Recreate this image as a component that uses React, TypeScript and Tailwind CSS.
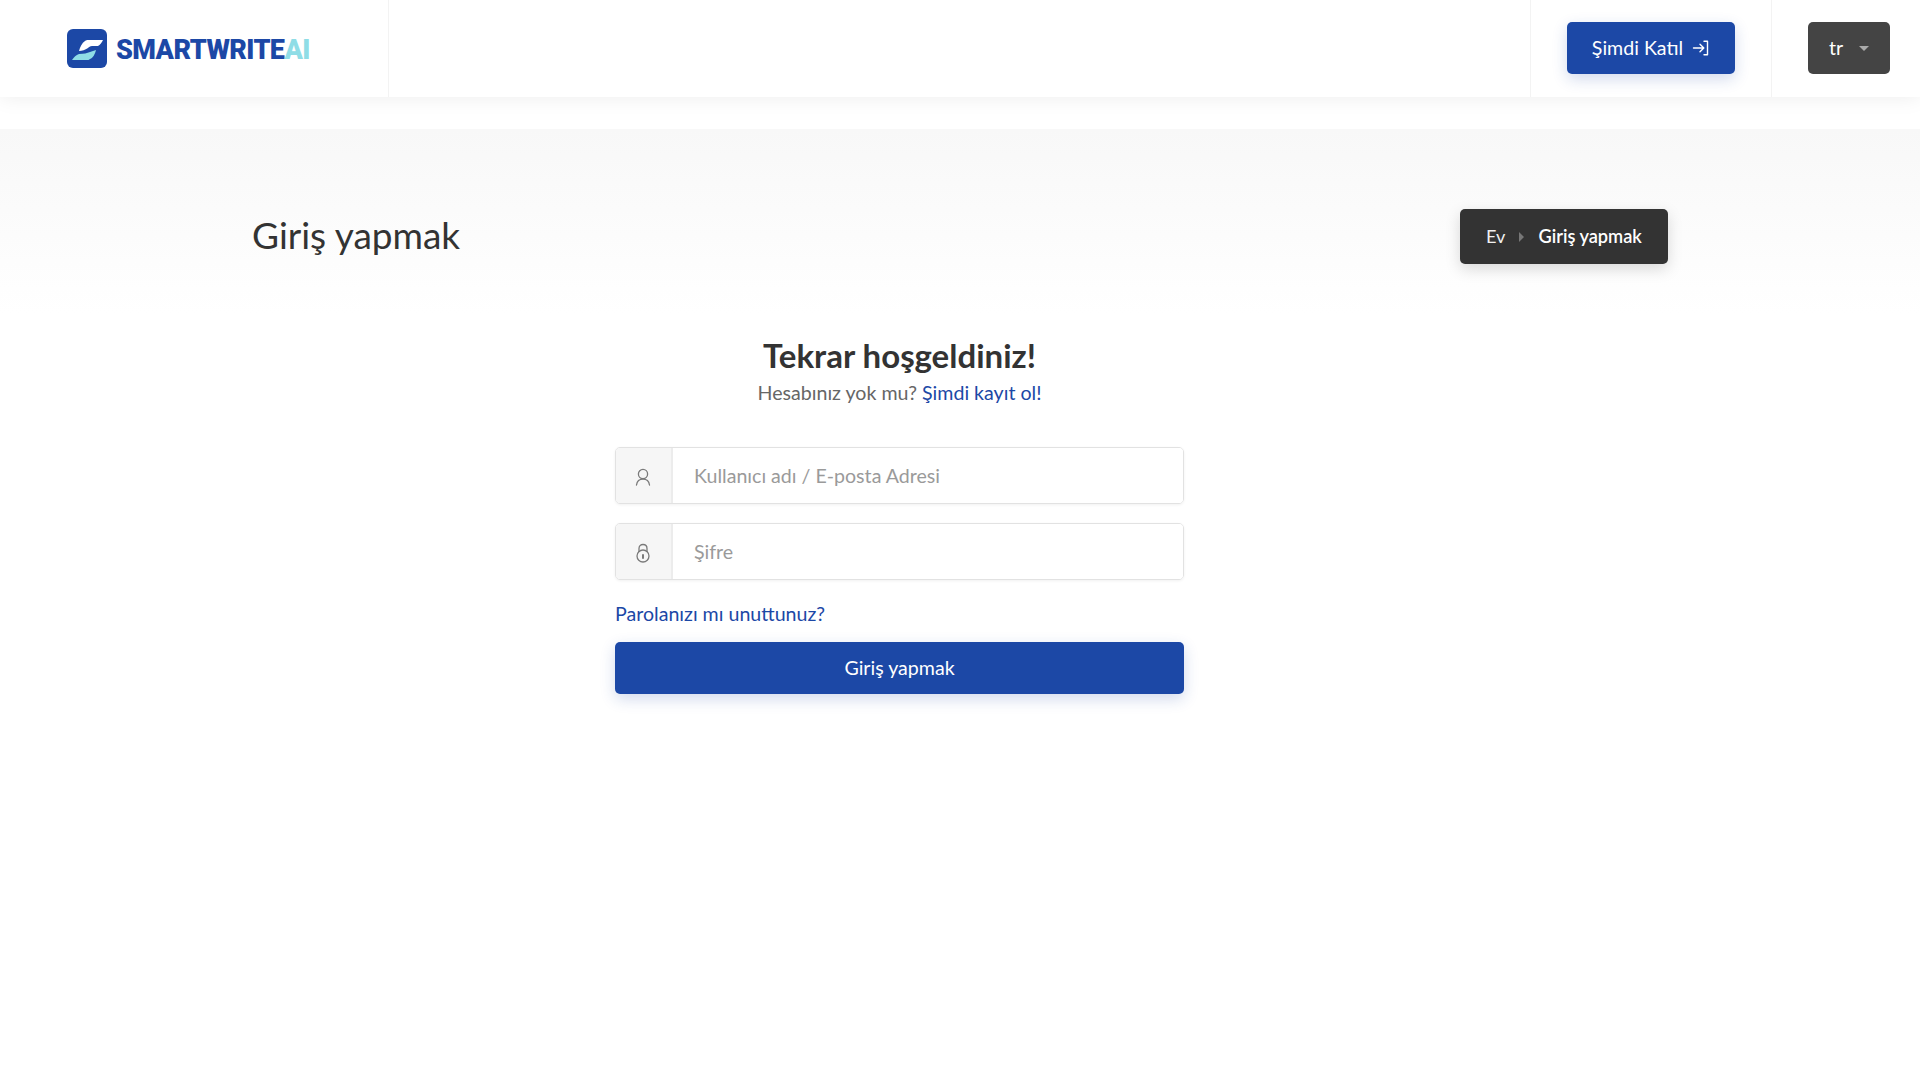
import React from "react";

const F = { fontFamily: '"Lato", "Open Sans", sans-serif' };

function Logo() {
  return (
    <div className="flex items-center gap-[9px]">
      <svg width="40" height="39" viewBox="0 0 40 39">
        <rect width="40" height="39" rx="6" fill="#1c48a6" />
        <path d="M18 12 C19 11 20 11 21 11 H36 C35 13 33 16 31 17 H25 C23 17 22 18 21 19 C18 21 15 22 12 22 C13 18 15 14 18 12 Z" fill="#ffffff" />
        <path d="M12 25 C17 25 20 24 23 23 L29 21 C28 25 26 29 23 30 C22 31 21 31 20 31 H5 C7 28 9 26 12 25 Z" fill="#8fdde6" />
      </svg>
      <span className="text-[27px] font-black leading-none tracking-[-0.6px] mt-[3px]" style={{ fontFamily: '"Roboto", sans-serif' }}>
        <span className="text-[#1c48a6]">SMARTWRITE</span>
        <span className="text-[#8fdde6]">AI</span>
      </span>
    </div>
  );
}

export default function App() {
  return (
    <div className="min-h-[1080px] bg-white text-[#333333]" style={F}>
      <header className="h-[97px] flex bg-white shadow-[0_0_20px_rgba(0,0,0,0.08)] relative">
        <div className="w-[389px] border-r border-[#f3f3f3] pl-[67px] flex items-center">
          <Logo />
        </div>
        <div className="flex-1" />
        <div className="w-[241px] border-l border-[#f3f3f3] flex items-center justify-center pb-[1px]">
          <button className="w-[168px] h-[52px] rounded-[5px] bg-[#1c48a6] text-white text-[19.6px] flex items-center justify-center gap-[9px] shadow-[0_5px_15px_rgba(28,72,166,0.2)]">
            Şimdi Katıl
            <svg width="18" height="18" viewBox="0 0 18 18" fill="none" stroke="#fff" strokeWidth="1.4" strokeLinecap="round" strokeLinejoin="round">
              <path d="M1.5 9 H11.5 M8 5.2 L11.8 9 L8 12.8" />
              <path d="M12 2.2 H15.5 V15.8 H12" />
            </svg>
          </button>
        </div>
        <div className="w-[149px] border-l border-[#f3f3f3] flex items-center pl-[36px] pb-[1px]">
          <button className="w-[82px] h-[52px] rounded-[5px] bg-[#444444] text-white text-[19.6px] flex items-center pl-[21px] gap-[16px]">
            tr
            <span className="w-0 h-0 border-x-[5px] border-x-transparent border-t-[5px] border-t-[#aaaaaa]" />
          </button>
        </div>
      </header>

      <section className="mt-[32px] h-[186px] bg-gradient-to-b from-[#f8f8f8] to-white">
        <div className="w-[1416px] mx-auto pt-[80px] flex items-center justify-between">
          <h1 className="text-[37px] leading-[51px] pb-[4px] text-[#333333]">Giriş yapmak</h1>
          <nav className="w-[208px] h-[55px] rounded-[5px] bg-[#333333] text-white text-[18.2px] flex items-center pl-[26px] shadow-[0_5px_15px_rgba(0,0,0,0.15)]">
            <span className="text-[#f0f0f0]">Ev</span>
            <span className="mx-[14px] w-0 h-0 border-y-[5px] border-y-transparent border-l-[5px] border-l-[#777777]" />
            <span className="font-semibold">Giriş yapmak</span>
          </nav>
        </div>
      </section>

      <main className="w-[569px] ml-[615px] mt-[16px]">
        <div className="text-center">
          <h2 className="text-[33px] leading-[48px] font-bold text-[#333333]">Tekrar hoşgeldiniz!</h2>
          <p className="text-[19.6px] leading-[27px] text-[#666666]">
            Hesabınız yok mu? <a className="text-[#1c48a6]">Şimdi kayıt ol!</a>
          </p>
        </div>

        <form className="mt-[41px] flex flex-col">
          <div className="h-[57px] flex rounded-[5px] border border-[#e2e2e2] overflow-hidden shadow-[0_1px_3px_rgba(0,0,0,0.06)]">
            <div className="w-[57px] pr-[2px] bg-[#f6f6f6] border-r-2 border-[#ececec] flex items-center justify-center">
              <svg width="18" height="20" viewBox="0 0 18 20" fill="none" stroke="#7a7a7a" strokeWidth="1.3" strokeLinecap="round" className="mt-[3px]">
                <circle cx="9" cy="7" r="4.6" />
                <path d="M2.5 18 C3 14.5 5.5 12.2 9 12.2 C12.5 12.2 15 14.5 15.5 18" />
              </svg>
            </div>
            <div className="flex-1 flex items-center pl-[21px] text-[19.6px] text-[#9a9a9a] bg-white">Kullanıcı adı / E-posta Adresi</div>
          </div>

          <div className="h-[57px] mt-[19px] flex rounded-[5px] border border-[#e2e2e2] overflow-hidden shadow-[0_1px_3px_rgba(0,0,0,0.06)]">
            <div className="w-[57px] pr-[2px] bg-[#f6f6f6] border-r-2 border-[#ececec] flex items-center justify-center">
              <svg width="16" height="20" viewBox="0 0 16 20" fill="none" stroke="#7a7a7a" strokeWidth="1.3" strokeLinecap="round" className="mt-[3px]">
                <circle cx="8" cy="13" r="6" />
                <path d="M4 8.5 V5.5 C4 3 5.8 1.5 8 1.5 C10.2 1.5 12 3 12 5.5 V8.5" />
                <path d="M8 12 V15" strokeWidth="2" />
              </svg>
            </div>
            <div className="flex-1 flex items-center pl-[21px] text-[19.6px] text-[#9a9a9a] bg-white">Şifre</div>
          </div>

          <a className="mt-[20px] text-[19.6px] leading-[27px] text-[#1c48a6]">Parolanızı mı unuttunuz?</a>

          <button className="mt-[15px] h-[52px] rounded-[5px] bg-[#1c48a6] text-white text-[19.6px] shadow-[0_5px_15px_rgba(28,72,166,0.2)]">
            Giriş yapmak
          </button>
        </form>
      </main>
    </div>
  );
}
